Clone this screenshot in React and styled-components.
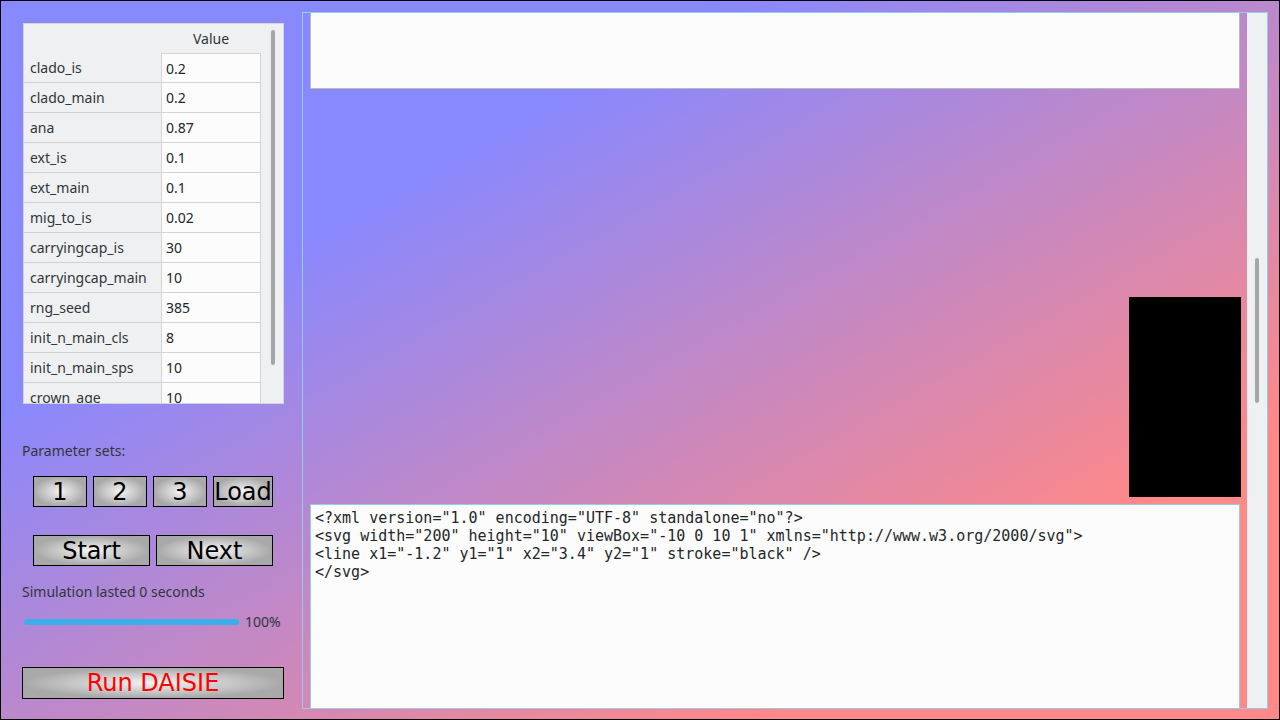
import React from 'react'
import styled, { createGlobalStyle } from 'styled-components'

const GlobalStyle = createGlobalStyle`
  html, body {
    margin: 0;
    padding: 0;
    width: 1280px;
    height: 720px;
    overflow: hidden;
  }
  * { box-sizing: border-box; }
`

const Window = styled.div`
  width: 1280px;
  height: 720px;
  border: 1px solid #000;
  background: linear-gradient(to bottom right, #8888ff 28%, #ff8888 80%);
  display: flex;
  font-family: "Noto Sans", "DejaVu Sans", sans-serif;
  font-size: 14px;
  color: #31363b;
`

const LeftPanel = styled.div`
  width: 301px;
  flex: none;
  padding: 22px 0 0 21px;
  display: flex;
  flex-direction: column;
`

const TableFrame = styled.div`
  width: 261px;
  height: 381px;
  margin-left: 1px;
  border: 1px solid #d3d4d5;
  background: #eff0f1;
  display: flex;
  overflow: hidden;
`

const Grid = styled.div`
  width: 238px;
  flex: none;
  display: flex;
  flex-direction: column;
`

const Row = styled.div`
  display: grid;
  grid-template-columns: 137px 100px;
  height: ${p => (p.$head ? 29 : 30)}px;
  flex: none;
`

const HeadCell = styled.div`
  display: flex;
  align-items: center;
  justify-content: center;
  padding-bottom: 1px;
`

const LabelCell = styled.div`
  display: flex;
  align-items: center;
  padding-left: 6px;
  border-bottom: 1px solid #cfd0d1;
`

const ValueCell = styled.div`
  display: flex;
  align-items: center;
  padding-left: 4px;
  background: #fcfcfc;
  border-top: ${p => (p.$first ? '1px solid #d3d4d5' : 'none')};
  border-left: 1px solid #d3d4d5;
  border-right: 1px solid #d3d4d5;
  border-bottom: 1px solid #d3d4d5;
  color: #232629;
`

const ScrollTrack = styled.div`
  width: ${p => p.$w}px;
  flex: none;
  background: #eff0f1;
  padding: ${p => p.$pad};
  display: flex;
  justify-content: center;
`

const ScrollHandle = styled.div`
  width: 4px;
  height: ${p => p.$h}px;
  border-radius: 2px;
  background: #a5a6a8;
`

const SectionLabel = styled.div`
  margin-top: ${p => p.$mt}px;
  line-height: 20px;
`

const ButtonRow = styled.div`
  display: flex;
  gap: ${p => p.$gap}px;
  margin-top: ${p => p.$mt}px;
  padding-left: 11px;
`

const GelButton = styled.button`
  width: ${p => p.$w}px;
  height: ${p => p.$h || 31}px;
  border: 1px solid #000;
  border-radius: 0;
  padding: 0;
  background: radial-gradient(ellipse closest-side at center, #f4f4f4 0%, #c8c8c8 60%, #a9a9a9 100%);
  font-family: "DejaVu Sans", sans-serif;
  font-size: 24px;
  line-height: 1;
  color: ${p => p.$color || '#000'};
  display: flex;
  align-items: center;
  justify-content: center;
`

const ProgressRow = styled.div`
  display: flex;
  align-items: center;
  margin-top: 10px;
  padding-left: 2px;
  gap: 6px;
`

const ProgressBar = styled.div`
  width: 215px;
  height: 6px;
  border-radius: 3px;
  background: #3daee9;
`

const RunWrap = styled.div`
  margin-top: 36px;
`

const RightFrame = styled.div`
  margin: 11px 0 10px 0;
  width: 966px;
  border: 1px solid #93cee9;
  display: flex;
`

const Viewport = styled.div`
  flex: 1;
  padding: 0 7px;
  display: flex;
  flex-direction: column;
  overflow: hidden;
`

const TopBox = styled.div`
  height: 76px;
  flex: none;
  background: #fcfcfc;
  border-left: 1px solid #b8babc;
  border-right: 1px solid #b8babc;
  border-bottom: 1px solid #b8babc;
`

const Picture = styled.div`
  margin: 208px -1px 0 auto;
  width: 112px;
  height: 200px;
  background: #000;
  flex: none;
`

const Editor = styled.pre`
  margin: 7px 0 0;
  flex: 1;
  background: #fcfcfc;
  border: 1px solid #93cee9;
  border-bottom: none;
  padding: 4px 4px;
  font-family: "DejaVu Sans Mono", monospace;
  font-size: 15px;
  line-height: 18px;
  color: #232629;
  white-space: pre;
  overflow: hidden;
`

const rows = [
  ['clado_is', '0.2'],
  ['clado_main', '0.2'],
  ['ana', '0.87'],
  ['ext_is', '0.1'],
  ['ext_main', '0.1'],
  ['mig_to_is', '0.02'],
  ['carryingcap_is', '30'],
  ['carryingcap_main', '10'],
  ['rng_seed', '385'],
  ['init_n_main_cls', '8'],
  ['init_n_main_sps', '10'],
  ['crown_age', '10'],
]

const svgText = `<?xml version="1.0" encoding="UTF-8" standalone="no"?>
<svg width="200" height="10" viewBox="-10 0 10 1" xmlns="http://www.w3.org/2000/svg">
<line x1="-1.2" y1="1" x2="3.4" y2="1" stroke="black" />
</svg>`

export default function App() {
  return (
    <>
      <GlobalStyle />
      <Window>
        <LeftPanel>
          <TableFrame>
            <Grid>
              <Row $head>
                <div />
                <HeadCell>Value</HeadCell>
              </Row>
              {rows.map(([k, v], i) => (
                <Row key={k}>
                  <LabelCell>{k}</LabelCell>
                  <ValueCell $first={i === 0}>{v}</ValueCell>
                </Row>
              ))}
            </Grid>
            <ScrollTrack $w={21} $pad="6px 0 0">
              <ScrollHandle $h={335} />
            </ScrollTrack>
          </TableFrame>

          <SectionLabel $mt={37}>Parameter sets:</SectionLabel>
          <ButtonRow $gap={6} $mt={15}>
            <GelButton $w={54}>1</GelButton>
            <GelButton $w={54}>2</GelButton>
            <GelButton $w={54}>3</GelButton>
            <GelButton $w={60}>Load</GelButton>
          </ButtonRow>
          <ButtonRow $gap={6} $mt={28}>
            <GelButton $w={117}>Start</GelButton>
            <GelButton $w={117}>Next</GelButton>
          </ButtonRow>

          <SectionLabel $mt={16}>Simulation lasted 0 seconds</SectionLabel>
          <ProgressRow>
            <ProgressBar />
            <span>100%</span>
          </ProgressRow>

          <RunWrap>
            <GelButton $w={262} $h={32} $color="#ff0000">Run DAISIE</GelButton>
          </RunWrap>
        </LeftPanel>

        <RightFrame>
          <Viewport>
            <TopBox />
            <Picture />
            <Editor>{svgText}</Editor>
          </Viewport>
          <ScrollTrack $w={20} $pad="245px 0 0">
            <ScrollHandle $h={145} />
          </ScrollTrack>
        </RightFrame>
      </Window>
    </>
  )
}
